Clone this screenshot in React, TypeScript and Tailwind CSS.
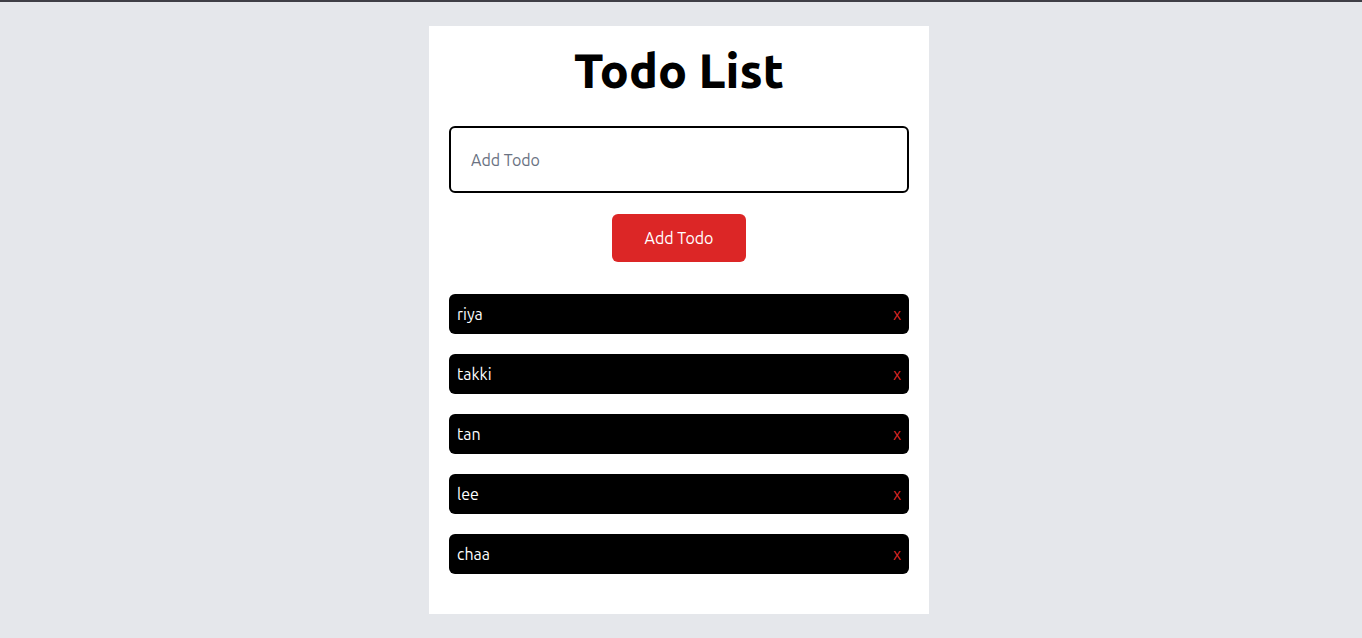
import React, { useState } from 'react';

const font = { fontFamily: '"Ubuntu", "Open Sans", "Noto Sans", sans-serif' };

const App: React.FC = () => {
  const [todos, setTodos] = useState<string[]>(['riya', 'takki', 'tan', 'lee', 'chaa']);
  const [text, setText] = useState('');

  const addTodo = () => {
    if (!text.trim()) return;
    setTodos(prev => [...prev, text.trim()]);
    setText('');
  };

  const removeTodo = (index: number) => {
    setTodos(prev => prev.filter((_, i) => i !== index));
  };

  return (
    <div className="min-h-screen bg-[#e5e7eb]" style={font}>
      <div className="h-[2px] bg-[#3f3f46]" />
      <div className="flex justify-center pt-6 pr-1">
        <div className="w-[500px] bg-white px-5 pt-5 pb-10">
          <h1 className="text-center text-5xl font-black leading-none text-black mb-8">Todo List</h1>

          <input
            value={text}
            onChange={e => setText(e.target.value)}
            placeholder="Add Todo"
            className="block w-full h-[67px] rounded-md border-2 border-black px-5 text-base text-black placeholder:text-gray-500 outline-none"
          />

          <div className="flex justify-center mt-[21px] mb-8">
            <button
              onClick={addTodo}
              className="h-12 w-[134px] rounded-md bg-[#dc2626] text-base text-white"
            >
              Add Todo
            </button>
          </div>

          <ul className="flex flex-col gap-5">
            {todos.map((todo, i) => (
              <li key={i} className="flex items-center justify-between h-10 rounded-md bg-black px-2 text-base text-white">
                <span>{todo}</span>
                <button onClick={() => removeTodo(i)} className="text-[#dc2626] text-base">x</button>
              </li>
            ))}
          </ul>
        </div>
      </div>
    </div>
  );
};

export default App;
